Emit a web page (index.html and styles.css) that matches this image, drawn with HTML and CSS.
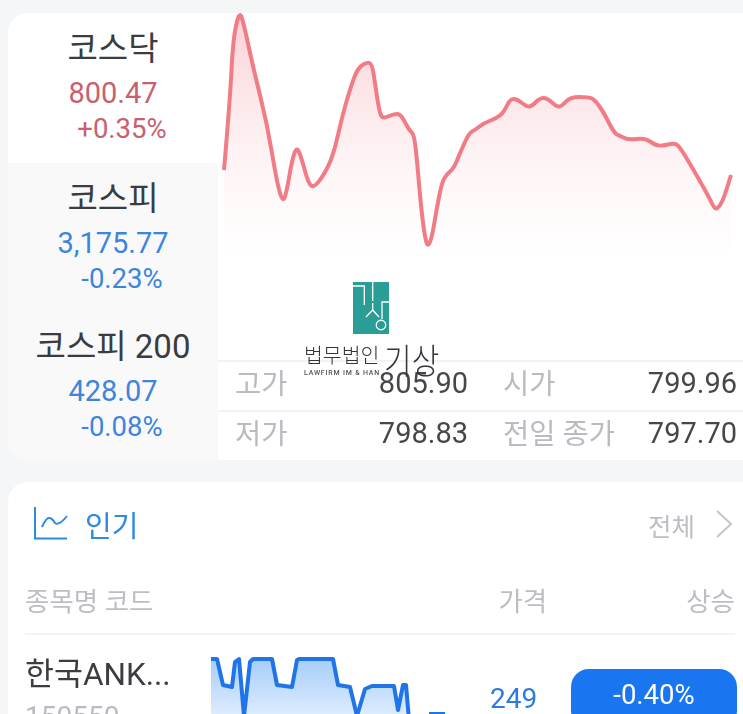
FILE: index.html
```html
<!DOCTYPE html>
<html lang="ko">
<head>
<meta charset="utf-8">
<title>증시</title>
<link rel="stylesheet" href="styles.css">
</head>
<body>
<main class="page">
  <section class="card market">
    <div class="tabs">
      <div class="tab tab-active">
        <div class="tab-name">코스닥</div>
        <div class="tab-price up">800.47</div>
        <div class="tab-rate up">+0.35%</div>
      </div>
      <div class="tab">
        <div class="tab-name">코스피</div>
        <div class="tab-price down">3,175.77</div>
        <div class="tab-rate down">-0.23%</div>
      </div>
      <div class="tab">
        <div class="tab-name">코스피 200</div>
        <div class="tab-price down">428.07</div>
        <div class="tab-rate down">-0.08%</div>
      </div>
    </div>
    <div class="detail">
      <svg class="chart" viewBox="218 13 525 347" aria-hidden="true">
        <defs>
          <linearGradient id="pink" x1="0" y1="15" x2="0" y2="250" gradientUnits="userSpaceOnUse">
            <stop offset="0" stop-color="#f59aa5" stop-opacity=".46"/>
            <stop offset="1" stop-color="#fbd9dc" stop-opacity=".03"/>
          </linearGradient>
        </defs>
        <path class="chart-fill" d="M224 170Q230 100 231.5 70Q233 40 236 26Q239 12 241 16Q243 20 248 43.5Q253 67 260 95Q267 123 272 153Q277 183 280 193Q283 203 285 196.5Q287 190 289.5 175Q292 160 294.5 153Q297 146 299.5 153Q302 160 305 171Q308 182 310.5 185Q313 188 317.5 183Q322 178 327.5 167.5Q333 157 338 135Q343 113 347.5 98Q352 83 355 75.5Q358 68 362.5 65Q367 62 369.5 63Q372 64 373.5 73.5Q375 83 377 96.5Q379 110 380.5 114Q382 118 384.5 117.5Q387 117 390.5 115.5Q394 114 397 114Q400 114 402.5 118Q405 122 407 126Q409 130 411.5 132Q414 134 415.5 147Q417 160 419 183.5Q421 207 423 222.5Q425 238 426.5 242.5Q428 247 430 242Q432 237 434.5 222Q437 207 439.5 194.5Q442 182 444.5 178Q447 174 450.5 171Q454 168 457 160.5Q460 153 464.5 143Q469 133 472 131.5Q475 130 479.5 126.5Q484 123 490.5 120.5Q497 118 500.5 115Q504 112 507 105.5Q510 99 513.5 99Q517 99 522 103Q527 107 529.5 106.5Q532 106 536 102Q540 98 543.5 98Q547 98 552 102.5Q557 107 559.5 106.5Q562 106 566 101.5Q570 97 579.5 97Q589 97 592 98.5Q595 100 599.5 106.5Q604 113 609 123Q614 133 617 134.5Q620 136 624.5 138Q629 140 637 139Q645 138 650 141.5Q655 145 658.5 145.5Q662 146 668 144.5Q674 143 676.5 144.5Q679 146 684 154Q689 162 699 179.5Q709 197 712 203.5Q715 210 717.5 208Q720 206 722.5 200.5Q725 195 731 175V250H224Z"/>
        <path class="chart-line" d="M224 170Q230 100 231.5 70Q233 40 236 26Q239 12 241 16Q243 20 248 43.5Q253 67 260 95Q267 123 272 153Q277 183 280 193Q283 203 285 196.5Q287 190 289.5 175Q292 160 294.5 153Q297 146 299.5 153Q302 160 305 171Q308 182 310.5 185Q313 188 317.5 183Q322 178 327.5 167.5Q333 157 338 135Q343 113 347.5 98Q352 83 355 75.5Q358 68 362.5 65Q367 62 369.5 63Q372 64 373.5 73.5Q375 83 377 96.5Q379 110 380.5 114Q382 118 384.5 117.5Q387 117 390.5 115.5Q394 114 397 114Q400 114 402.5 118Q405 122 407 126Q409 130 411.5 132Q414 134 415.5 147Q417 160 419 183.5Q421 207 423 222.5Q425 238 426.5 242.5Q428 247 430 242Q432 237 434.5 222Q437 207 439.5 194.5Q442 182 444.5 178Q447 174 450.5 171Q454 168 457 160.5Q460 153 464.5 143Q469 133 472 131.5Q475 130 479.5 126.5Q484 123 490.5 120.5Q497 118 500.5 115Q504 112 507 105.5Q510 99 513.5 99Q517 99 522 103Q527 107 529.5 106.5Q532 106 536 102Q540 98 543.5 98Q547 98 552 102.5Q557 107 559.5 106.5Q562 106 566 101.5Q570 97 579.5 97Q589 97 592 98.5Q595 100 599.5 106.5Q604 113 609 123Q614 133 617 134.5Q620 136 624.5 138Q629 140 637 139Q645 138 650 141.5Q655 145 658.5 145.5Q662 146 668 144.5Q674 143 676.5 144.5Q679 146 684 154Q689 162 699 179.5Q709 197 712 203.5Q715 210 717.5 208Q720 206 722.5 200.5Q725 195 731 175"/>
      </svg>
      <dl class="stats">
        <div class="stat"><dt>고가</dt><dd>805.90</dd></div>
        <div class="stat"><dt>시가</dt><dd>799.96</dd></div>
        <div class="stat"><dt>저가</dt><dd>798.83</dd></div>
        <div class="stat"><dt>전일 종가</dt><dd>797.70</dd></div>
      </dl>
      <div class="brand">
        <svg class="brand-mark" viewBox="0 0 36 52" aria-hidden="true">
          <rect width="36" height="52" fill="#2a9d96"/>
          <path d="M0 4H11.3V23M19.7 0V19M19.7 21V28M13 35L19.7 28 26 35M29 37V20H36" fill="none" stroke="#fff" stroke-width="1.3"/>
          <circle cx="28" cy="43" r="4.7" fill="none" stroke="#fff" stroke-width="1.4"/>
        </svg>
        <div class="brand-text">
          <div class="brand-left">
            <div class="brand-ko">법무법인</div>
            <div class="brand-en">LAWFIRM IM &amp; HAN</div>
          </div>
          <div class="brand-name">기상</div>
        </div>
      </div>
    </div>
  </section>

  <section class="card popular">
    <header class="pop-head">
      <div class="pop-title">
        <svg class="pop-icon" viewBox="0 0 34 34" aria-hidden="true">
          <path d="M1 0V31.5H33" fill="none" stroke="#2b8be0" stroke-width="2"/>
          <path d="M8 20Q12 11 15 11Q18 11 21 16Q25 19 33 9" fill="none" stroke="#2b8be0" stroke-width="2"/>
        </svg>
        <span>인기</span>
      </div>
      <div class="pop-all">
        <span>전체</span>
        <svg class="chevron" viewBox="0 0 18 28" aria-hidden="true">
          <path d="M2 1L16 14 2 27" fill="none" stroke="#c4c6cb" stroke-width="2"/>
        </svg>
      </div>
    </header>
    <div class="col-head">
      <span class="col-name">종목명 코드</span>
      <span class="col-price">가격</span>
      <span class="col-rate">상승</span>
    </div>
    <div class="row">
      <div class="row-name">
        <div class="stock">한국ANK...</div>
        <div class="code">150550</div>
      </div>
      <svg class="spark" viewBox="211 650 236 80" aria-hidden="true">
        <defs>
          <linearGradient id="blue" x1="0" y1="657" x2="0" y2="730" gradientUnits="userSpaceOnUse">
            <stop offset="0" stop-color="#a6cdf9"/>
            <stop offset="1" stop-color="#eef5fe"/>
          </linearGradient>
        </defs>
        <path fill="url(#blue)" d="M211 657H217L223 683 232 685 235 660 239 657 244 714 250 660 253 657H272L277 683 292 685 297 658 299 657H333L338 683 350 685 357 714 365 687 372 684H394L398 708 403 683H406L410 730H211Z"/>
        <path class="spark-line" d="M211 657H217L223 683 232 685 235 660 239 657 244 714 250 660 253 657H272L277 683 292 685 297 658 299 657H333L338 683 350 685 357 714 365 687 372 684H394L398 708 403 683H406L410 730M429 712H445"/>
      </svg>
      <div class="row-price">249</div>
      <div class="pill">-0.40%</div>
    </div>
  </section>
</main>
</body>
</html>
```

FILE: styles.css
```css
* { box-sizing: border-box; }

html, body {
  margin: 0;
  height: 714px;
  overflow: hidden;
  background: #f4f6f8;
}

.page {
  padding: 13px 0 0 8px;
  font-family: Roboto, "Noto Sans CJK KR", sans-serif;
  filter: blur(0.55px);
}

.card {
  background: #fff;
  border-radius: 20px 0 0 20px;
  overflow: hidden;
}

.market {
  display: flex;
  height: 447px;
}

.tabs {
  flex: 0 0 210px;
  display: flex;
  flex-direction: column;
  background: #f9f9fa;
}

.tab {
  height: 149px;
  padding-top: 16px;
  text-align: center;
}

.tab-active {
  height: 150px;
  background: #fff;
}

.tab-name {
  font-size: 33px;
  line-height: 40px;
  color: #3a3c40;
}

.tab-price {
  margin-top: 7px;
  font-size: 29px;
  line-height: 35px;
}

.tab-rate {
  padding-left: 18px;
  font-size: 27.5px;
  line-height: 35px;
}

.up { color: #c8616f; }
.down { color: #3c85de; }

.detail {
  position: relative;
  flex: 1;
  min-width: 0;
  display: flex;
  flex-direction: column;
}

.chart {
  display: block;
  width: 525px;
  height: 347px;
  flex: none;
}

.chart-fill { fill: url(#pink); }

.chart-line {
  fill: none;
  stroke: #f17c86;
  stroke-width: 4;
  stroke-linejoin: round;
}

.stats {
  flex: 1;
  margin: 0;
  display: grid;
  grid-template-columns: 250px 1fr;
  grid-auto-rows: 50px;
}

.stat {
  display: flex;
  justify-content: space-between;
  align-items: center;
  border-top: 2px solid #f1f2f4;
  font-size: 29px;
  padding: 0 0 6px 17px;
}

.stat:nth-child(even) {
  padding: 0 6px 6px 35px;
}

.stat dt {
  padding-bottom: 4px;
  font-size: 28.5px;
  color: #b9bbc1;
}

.stat dd {
  margin: 0;
  color: #45474b;
}

.brand {
  position: absolute;
  left: 86px;
  top: 269px;
  display: flex;
  flex-direction: column;
  align-items: flex-start;
}

.brand-mark {
  display: block;
  width: 36px;
  height: 52px;
  margin-left: 49px;
}

.brand-text {
  display: flex;
  gap: 4px;
  margin-top: 10px;
}

.brand-ko {
  font-size: 20.5px;
  line-height: 24px;
  font-weight: 300;
  color: #33353a;
  white-space: nowrap;
}

.brand-en {
  font-size: 7px;
  line-height: 9px;
  margin-top: 1px;
  font-weight: 500;
  letter-spacing: .8px;
  color: #50535a;
  white-space: nowrap;
}

.brand-name {
  font-size: 30px;
  line-height: 36px;
  font-weight: 300;
  color: #33353a;
  white-space: nowrap;
  transform: scaleY(1.18);
}

.popular {
  margin-top: 22px;
  height: 260px;
  padding: 0 8px 0 17px;
  border-radius: 20px 0 0 0;
}

.pop-head {
  display: flex;
  justify-content: space-between;
  align-items: center;
  height: 84px;
  padding-left: 9px;
}

.pop-title {
  display: flex;
  align-items: center;
  gap: 17px;
  font-size: 29px;
  color: #2b8be0;
}

.pop-icon {
  display: block;
  width: 34px;
  height: 34px;
}

.pop-all {
  display: flex;
  align-items: center;
  gap: 20px;
  font-size: 25.5px;
  color: #bcbec3;
  padding-right: 2px;
}

.chevron {
  display: block;
  width: 18px;
  height: 28px;
}

.col-head {
  display: flex;
  align-items: center;
  height: 69px;
  border-bottom: 2px solid #f3f4f5;
  font-size: 26.5px;
  color: #bcbec3;
}

.col-name { flex: 1; }
.col-price { margin-right: 139px; }

.row {
  display: flex;
  align-items: flex-start;
  margin-right: -2px;
  padding-top: 20px;
}

.row-name { width: 186px; flex: none; }

.stock {
  font-size: 31.5px;
  line-height: 40px;
  color: #3b3d41;
}

.code {
  margin-top: 5px;
  font-size: 28px;
  color: #b9bbc1;
}

.spark {
  flex: none;
  width: 236px;
  height: 80px;
  margin-top: -3px;
}

.row-price {
  width: 124px;
  margin-top: 27px;
  padding-left: 43px;
  flex: none;
  font-size: 28px;
  line-height: 34px;
  color: #2b7be0;
}

.spark-line {
  fill: none;
  stroke: #1f74e8;
  stroke-width: 4;
  stroke-linejoin: round;
}

.pill {
  flex: none;
  width: 166px;
  height: 60px;
  margin-top: 14px;
  padding-top: 9px;
  border-radius: 18px;
  background: #1a76f0;
  color: #fff;
  font-size: 27.5px;
  line-height: 34px;
  text-align: center;
}
```
